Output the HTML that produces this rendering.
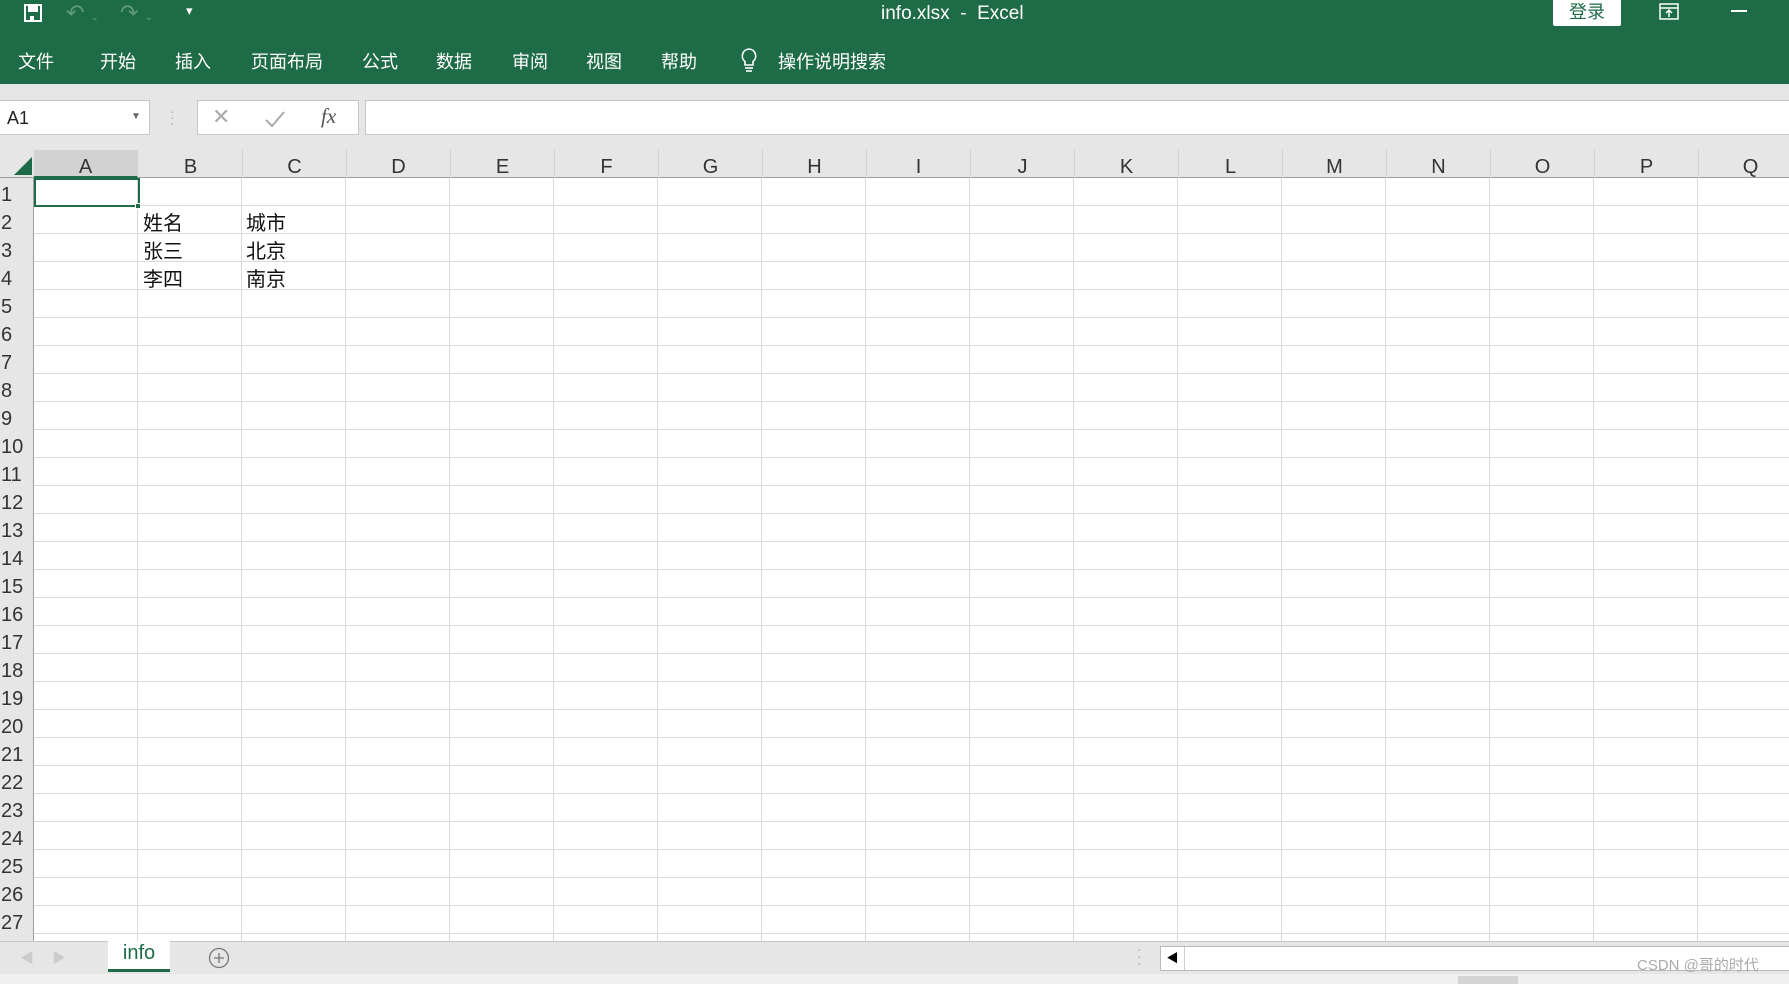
<!DOCTYPE html>
<html><head><meta charset="utf-8"><style>
*{margin:0;padding:0;box-sizing:border-box}
body{width:1789px;height:984px;overflow:hidden;background:#fff;font-family:"Liberation Sans","Noto Sans CJK SC",sans-serif;position:relative}
.a{position:absolute}
#top{left:0;top:0;width:1789px;height:84px;background:#1e6b47;color:#fff}
.menu{top:48px;font-size:18px;color:#fff}
#gray{left:0;top:84px;width:1789px;height:66px;background:#e6e6e6}
.box{background:#fff;border:1px solid #c6c6c6}
#hdr{left:0;top:150px;width:1789px;height:28px;background:#e6e6e6;border-bottom:1px solid #9e9e9e}
.ch{top:150px;height:28px;width:104px;text-align:center;font-size:20px;line-height:34px;color:#333;border-right:1px solid #d0d0d0}
#rh{left:0;top:178px;width:34px;height:763px;background:#e6e6e6;border-right:1px solid #9e9e9e}
.rn{left:0;width:34px;font-size:20px;color:#333;line-height:28px;padding-left:1px}
#grid{left:34px;top:178px;width:1755px;height:763px;
background-image:linear-gradient(to right,transparent 103px,#dadada 103px,#dadada 104px),linear-gradient(to bottom,transparent 27px,#dadada 27px,#dadada 28px);
background-size:104px 100%,100% 28px;background-position:0 0,0 0}
.ct{font-size:20px;color:#111}
#tabs{left:0;top:941px;width:1789px;height:33px;background:#e6e6e6;border-top:1px solid #c6c6c6}
#status{left:0;top:974px;width:1789px;height:10px;background:#f0f0f0}
</style></head><body>
<div id="top" class="a">
  <svg class="a" style="left:23px;top:3px" width="20" height="20" viewBox="0 0 20 20"><rect x="2" y="2" width="16" height="16" fill="none" stroke="#fff" stroke-width="2"/><rect x="5" y="2" width="10" height="7" fill="#fff"/><rect x="7" y="13" width="4" height="5" fill="#fff"/></svg>
  <div class="a" style="left:66px;top:0;font-size:22px;color:#5f9a7c">↶ <span style="font-size:10px">⌄</span></div>
  <div class="a" style="left:120px;top:0;font-size:22px;color:#5f9a7c">↷ <span style="font-size:10px">⌄</span></div>
  <div class="a" style="left:186px;top:3px;font-size:13px;color:#fff">▾</div>
  <div class="a" style="left:881px;top:3px;font-size:19px">info.xlsx&nbsp; - &nbsp;Excel</div>
  <div class="a" style="left:1553px;top:0;width:68px;height:26px;background:#fff;color:#1e6b47;font-size:18px;text-align:center;line-height:25px;border-radius:0 0 2px 2px">登录</div>
  <svg class="a" style="left:1659px;top:3px" width="20" height="17"><rect x="1" y="1" width="18" height="15" fill="none" stroke="#fff" stroke-width="1.5"/><line x1="1" y1="5" x2="19" y2="5" stroke="#fff" stroke-width="1.5"/><path d="M10 14V8M7 10l3-3 3 3" stroke="#fff" fill="none" stroke-width="1.5"/></svg>
  <div class="a" style="left:1731px;top:10px;width:16px;height:2px;background:#fff"></div>
  <div class="a menu" style="left:18px">文件</div>
  <div class="a menu" style="left:100px">开始</div>
  <div class="a menu" style="left:175px">插入</div>
  <div class="a menu" style="left:251px">页面布局</div>
  <div class="a menu" style="left:362px">公式</div>
  <div class="a menu" style="left:436px">数据</div>
  <div class="a menu" style="left:512px">审阅</div>
  <div class="a menu" style="left:586px">视图</div>
  <div class="a menu" style="left:661px">帮助</div>
  <svg class="a" style="left:740px;top:47px" width="18" height="26" viewBox="0 0 18 26"><path d="M9 2a7 7 0 0 0-4 12.5V18h8v-3.5A7 7 0 0 0 9 2z" fill="none" stroke="#fff" stroke-width="1.6"/><line x1="5" y1="21" x2="13" y2="21" stroke="#fff" stroke-width="1.6"/><line x1="6" y1="24" x2="12" y2="24" stroke="#fff" stroke-width="1.6"/></svg>
  <div class="a menu" style="left:778px">操作说明搜索</div>
</div>
<div id="gray" class="a"></div>
<div class="a box" style="left:-1px;top:100px;width:151px;height:35px"><span class="a" style="left:7px;top:7px;font-size:18px;color:#222">A1</span><span class="a" style="left:131px;top:10px;font-size:10px;color:#666">▼</span></div>
<div class="a" style="left:170px;top:108px;color:#aaa;font-size:14px;line-height:6px">·<br>·<br>·</div>
<div class="a box" style="left:197px;top:100px;width:162px;height:35px">
  <span class="a" style="left:14px;top:3px;font-size:22px;color:#aaa">✕</span>
  <svg class="a" style="left:66px;top:9px" width="22" height="18"><path d="M2 10l6 6L20 2" fill="none" stroke="#aaa" stroke-width="2"/></svg>
  <span class="a" style="left:123px;top:3px;font-size:21px;color:#555;font-family:'Liberation Serif',serif;font-style:italic">fx</span>
</div>
<div class="a box" style="left:365px;top:100px;width:1430px;height:35px"></div>
<div id="hdr" class="a"></div>
<svg class="a" style="left:12px;top:157px" width="20" height="18"><polygon points="20,0 20,18 2,18" fill="#1e6b47"/></svg>
<div class="a ch" style="left:34px;background:#d2d2d2;border-bottom:2px solid #1e6b47;height:28px">A</div>
<div class="a ch" style="left:139px">B</div>
<div class="a ch" style="left:243px">C</div>
<div class="a ch" style="left:347px">D</div>
<div class="a ch" style="left:451px">E</div>
<div class="a ch" style="left:555px">F</div>
<div class="a ch" style="left:659px">G</div>
<div class="a ch" style="left:763px">H</div>
<div class="a ch" style="left:867px">I</div>
<div class="a ch" style="left:971px">J</div>
<div class="a ch" style="left:1075px">K</div>
<div class="a ch" style="left:1179px">L</div>
<div class="a ch" style="left:1283px">M</div>
<div class="a ch" style="left:1387px">N</div>
<div class="a ch" style="left:1491px">O</div>
<div class="a ch" style="left:1595px">P</div>
<div class="a ch" style="left:1699px">Q</div>
<div id="grid" class="a"></div>
<div id="rh" class="a">
<div class="a rn" style="top:3px">1</div><div class="a rn" style="top:31px">2</div><div class="a rn" style="top:59px">3</div><div class="a rn" style="top:87px">4</div><div class="a rn" style="top:115px">5</div><div class="a rn" style="top:143px">6</div><div class="a rn" style="top:171px">7</div><div class="a rn" style="top:199px">8</div><div class="a rn" style="top:227px">9</div><div class="a rn" style="top:255px">10</div><div class="a rn" style="top:283px">11</div><div class="a rn" style="top:311px">12</div><div class="a rn" style="top:339px">13</div><div class="a rn" style="top:367px">14</div><div class="a rn" style="top:395px">15</div><div class="a rn" style="top:423px">16</div><div class="a rn" style="top:451px">17</div><div class="a rn" style="top:479px">18</div><div class="a rn" style="top:507px">19</div><div class="a rn" style="top:535px">20</div><div class="a rn" style="top:563px">21</div><div class="a rn" style="top:591px">22</div><div class="a rn" style="top:619px">23</div><div class="a rn" style="top:647px">24</div><div class="a rn" style="top:675px">25</div><div class="a rn" style="top:703px">26</div><div class="a rn" style="top:731px">27</div>
</div>
<div class="a" style="left:34px;top:178px;width:106px;height:29px;border:2px solid #1e6b47"></div>
<div class="a" style="left:135px;top:203px;width:6px;height:6px;background:#1e6b47;border:1px solid #fff"></div>
<div class="a ct" style="left:143px;top:207px">姓名</div><div class="a ct" style="left:246px;top:207px">城市</div>
<div class="a ct" style="left:143px;top:235px">张三</div><div class="a ct" style="left:246px;top:235px">北京</div>
<div class="a ct" style="left:143px;top:263px">李四</div><div class="a ct" style="left:246px;top:263px">南京</div>
<div id="tabs" class="a">
  <span class="a" style="left:20px;top:6px;color:#ccc;font-size:14px">◀</span>
  <span class="a" style="left:52px;top:6px;color:#ccc;font-size:14px">▶</span>
  <div class="a" style="left:108px;top:-1px;width:62px;height:31px;background:#fff;border-bottom:3px solid #1e6b47;color:#1e6b47;font-size:20px;text-align:center;line-height:24px">info</div>
  <svg class="a" style="left:208px;top:5px" width="22" height="22"><circle cx="11" cy="11" r="9.5" fill="none" stroke="#777" stroke-width="1.3"/><path d="M11 6v10M6 11h10" stroke="#777" stroke-width="1.3"/></svg>
  <span class="a" style="left:1137px;top:4px;color:#aaa;font-size:14px;line-height:7px">·<br>·<br>·</span>
  <div class="a" style="left:1160px;top:4px;width:640px;height:25px;background:#fff;border:1px solid #bbb"><div class="a" style="left:0;top:0;width:24px;height:23px;border-right:1px solid #ccc;font-size:12px;text-align:center;line-height:23px">◀</div></div>
  <span class="a" style="left:1637px;top:12px;font-size:15px;color:#aaa">CSDN @哥的时代</span>
</div>
<div id="status" class="a"></div>
<div class="a" style="left:1458px;top:976px;width:60px;height:8px;background:#d4d4d4"></div>
</body></html>
